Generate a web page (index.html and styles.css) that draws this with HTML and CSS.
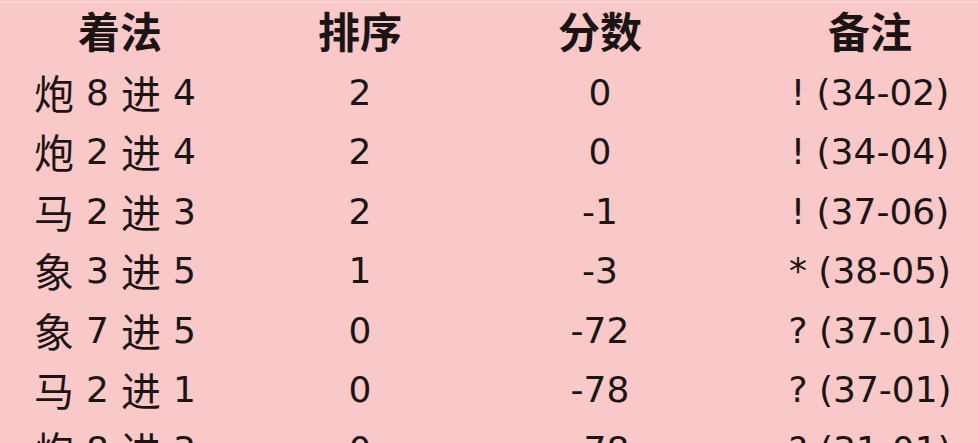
FILE: index.html
```html
<!DOCTYPE html>
<html lang="zh">
<head>
<meta charset="utf-8">
<link rel="stylesheet" href="styles.css">
</head>
<body>
<div class="table">
  <div class="row head">
    <div class="cell">着法</div><div class="cell">排序</div><div class="cell">分数</div><div class="cell">备注</div>
  </div>
  <div class="row"><div class="cell move"><span class="zh">炮</span><span>8</span><span class="zh">进</span><span>4</span></div><div class="cell">2</div><div class="cell">0</div><div class="cell">! (34-02)</div></div>
  <div class="row"><div class="cell move"><span class="zh">炮</span><span>2</span><span class="zh">进</span><span>4</span></div><div class="cell">2</div><div class="cell">0</div><div class="cell">! (34-04)</div></div>
  <div class="row"><div class="cell move"><span class="zh">马</span><span>2</span><span class="zh">进</span><span>3</span></div><div class="cell">2</div><div class="cell">-1</div><div class="cell">! (37-06)</div></div>
  <div class="row"><div class="cell move"><span class="zh">象</span><span>3</span><span class="zh">进</span><span>5</span></div><div class="cell">1</div><div class="cell">-3</div><div class="cell">* (38-05)</div></div>
  <div class="row"><div class="cell move"><span class="zh">象</span><span>7</span><span class="zh">进</span><span>5</span></div><div class="cell">0</div><div class="cell">-72</div><div class="cell">? (37-01)</div></div>
  <div class="row"><div class="cell move"><span class="zh">马</span><span>2</span><span class="zh">进</span><span>1</span></div><div class="cell">0</div><div class="cell">-78</div><div class="cell">? (37-01)</div></div>
  <div class="row"><div class="cell move"><span class="zh">炮</span><span>8</span><span class="zh">进</span><span>3</span></div><div class="cell">0</div><div class="cell">-78</div><div class="cell">? (31-01)</div></div>
</div>
</body>
</html>
```
FILE: styles.css
```css
html, body {
  margin: 0;
  padding: 0;
  width: 978px;
  height: 443px;
  overflow: hidden;
  background: #f9c8c8;
}
.table {
  margin-top: 2px;
  border-top: 1px solid #fbd9d9;
  font-family: "DejaVu Sans", "Noto Sans CJK SC", sans-serif;
  font-size: 36px;
  color: #1c1414;
  width: 1020px;
}
.row {
  display: grid;
  grid-template-columns: 240px 240px 240px 300px;
  height: 59.5px;
  align-items: center;
}
.head {
  height: 54px;
  padding-bottom: 6px;
}
.cell {
  text-align: center;
  white-space: nowrap;
  line-height: 1;
}
.head .cell {
  font-family: "Noto Sans CJK SC", sans-serif;
  font-weight: 700;
  font-size: 42px;
}
.move {
  display: flex;
  justify-content: center;
  align-items: center;
  gap: 12px;
  padding-right: 10px;
}
.zh {
  font-family: "Noto Sans CJK SC", sans-serif;
  font-size: 40px;
  position: relative;
  top: -1px;
}
```
